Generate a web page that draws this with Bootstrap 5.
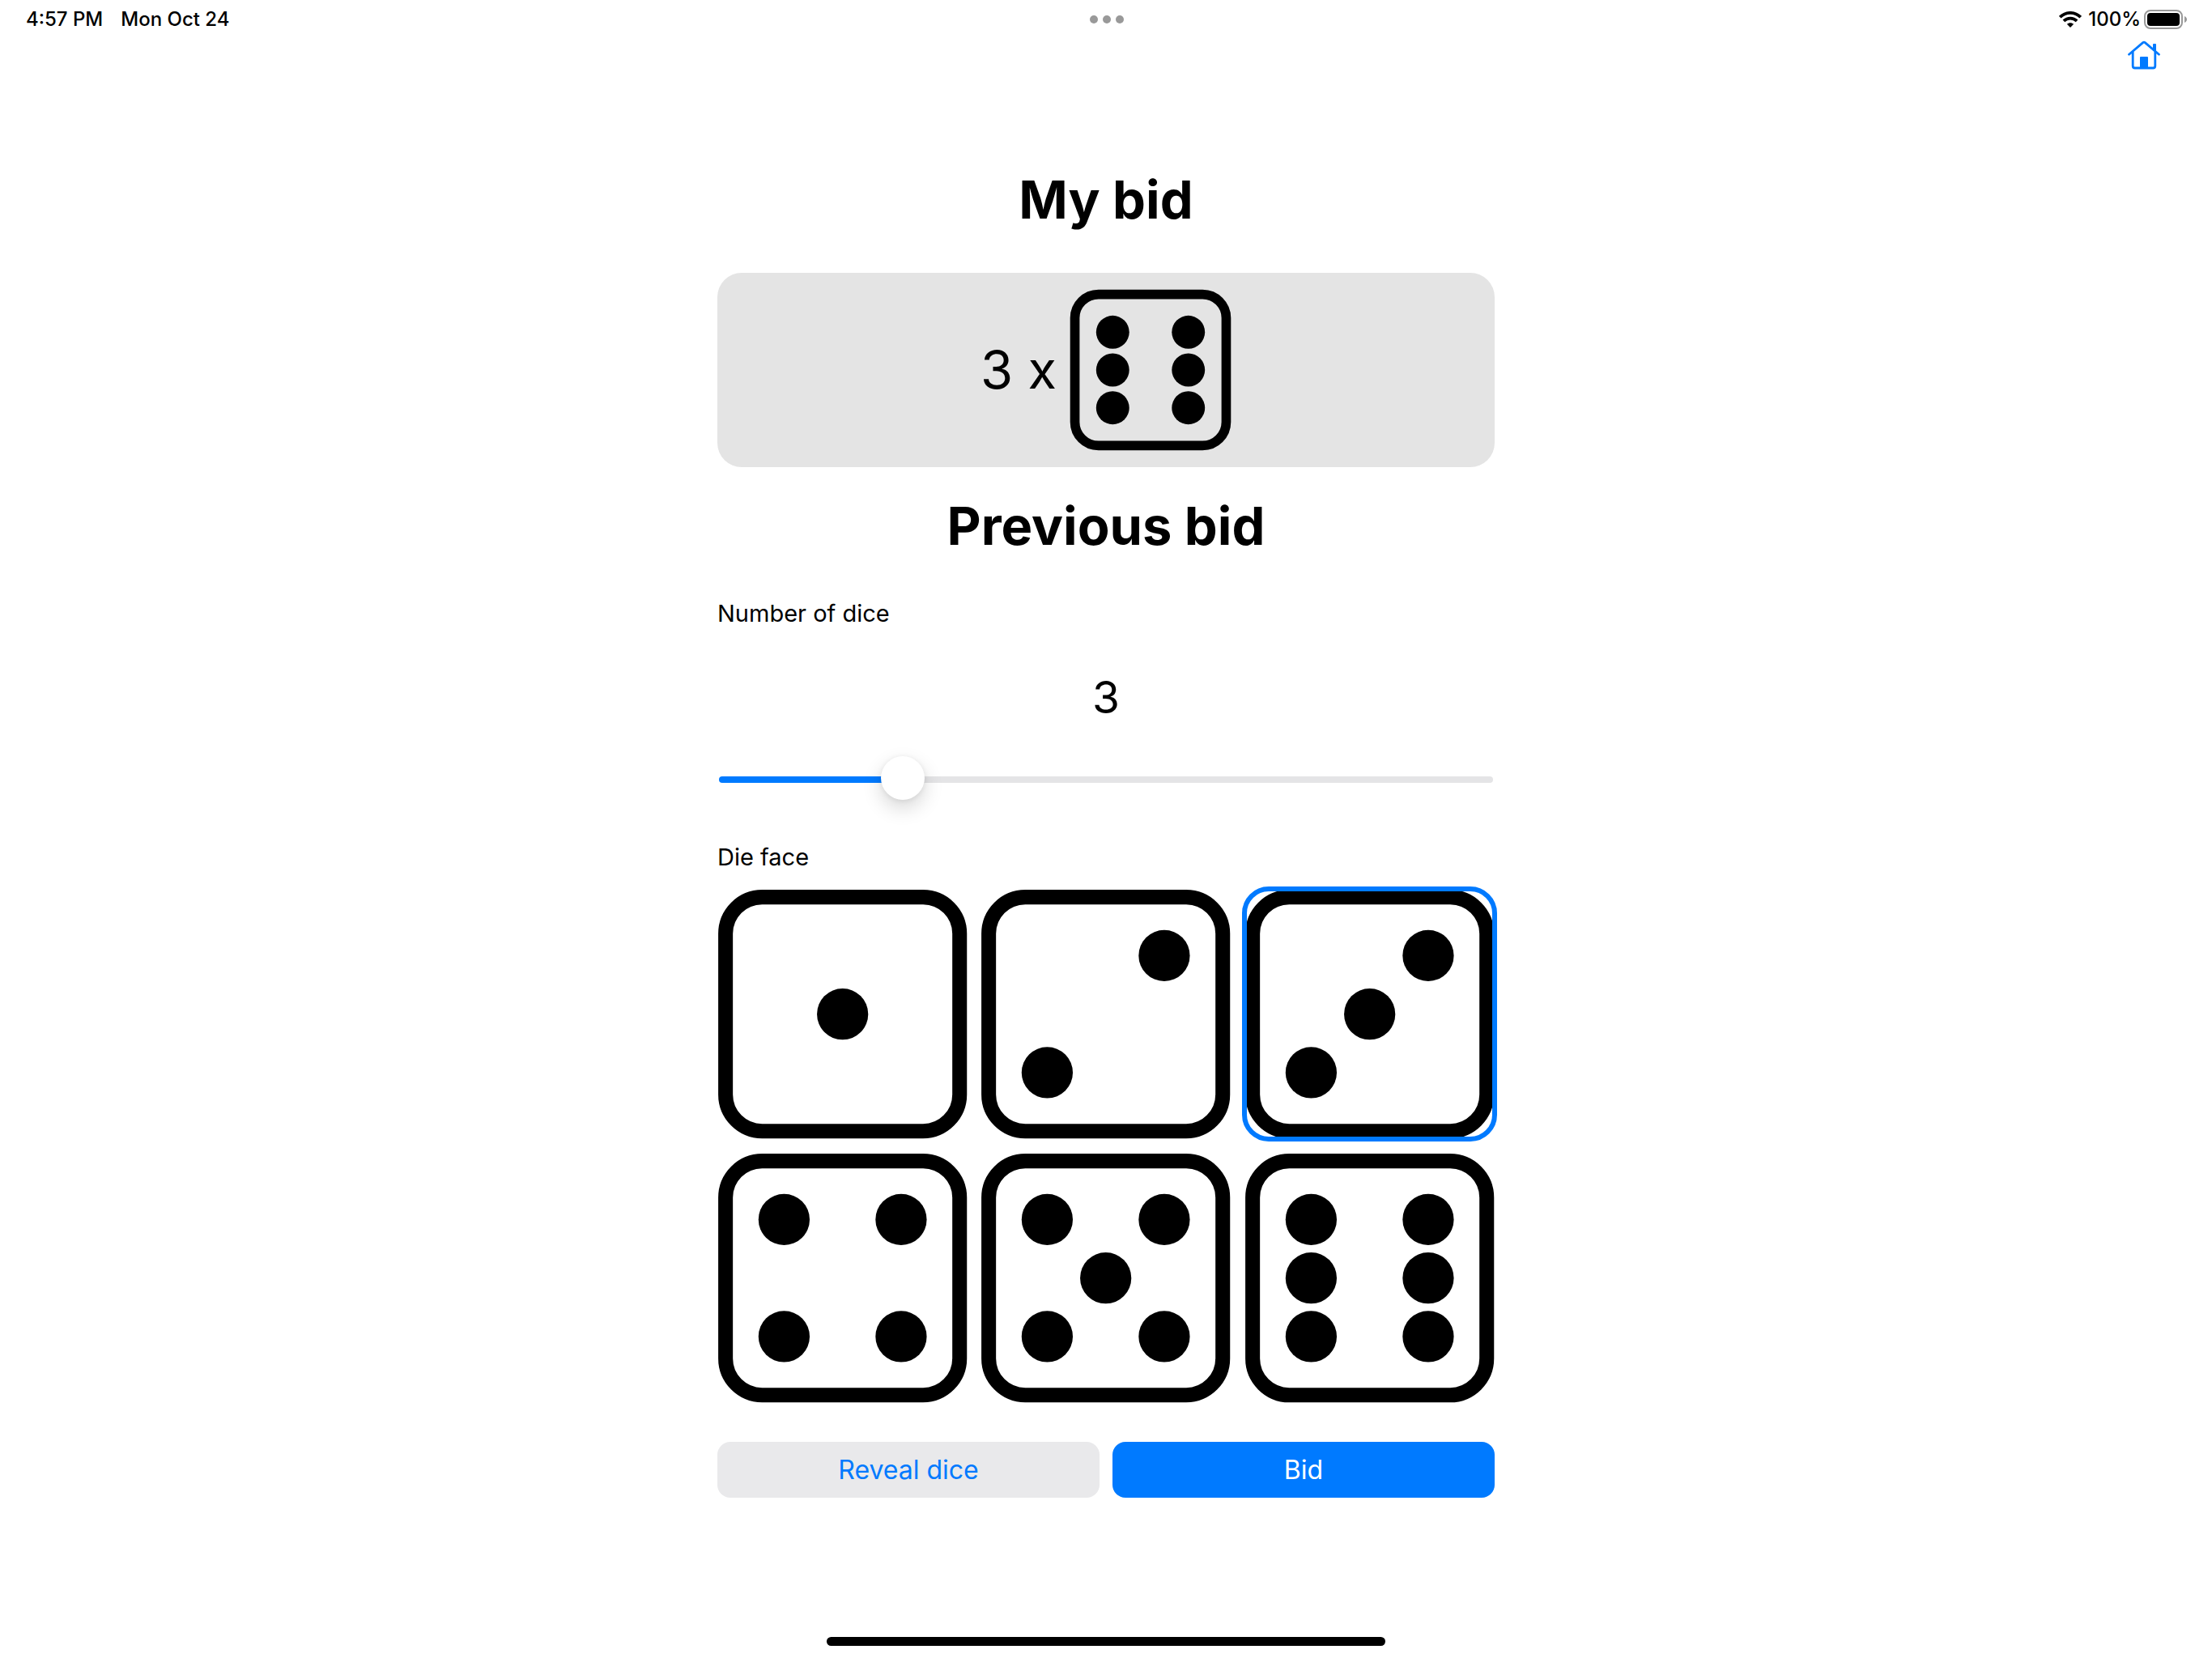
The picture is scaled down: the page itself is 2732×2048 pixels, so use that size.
<!DOCTYPE html>
<html lang="en">
<head>
<meta charset="utf-8">
<meta name="viewport" content="width=device-width, initial-scale=1">
<title>My bid</title>
<link href="https://cdn.jsdelivr.net/npm/bootstrap@5.3.0/dist/css/bootstrap.min.css" rel="stylesheet">
<style>
  :root { --ios-blue: #007aff; }
  body { font-family: Inter, "Liberation Sans", sans-serif; color: #000; background: #fff; }
  .status-bar { height: 48px; padding: 0 30px 0 32px; font-size: 24px; line-height: 48px; font-weight: 500; }
  .status-side { flex: 1 1 0; }
  .status-date { margin-left: 22px; }
  .status-dots { gap: 6px; }
  .status-dot { width: 10px; height: 10px; background: #999; }
  .tool-bar { height: 44px; padding: 2px 64px; }
  .tool-bar a { color: var(--ios-blue); line-height: 0; }
  .bid-panel { max-width: 960px; margin-top: 115px; }
  .bid-title { font-size: 65px; line-height: 80px; font-weight: 700; margin-bottom: 50px; }
  .bid-card { background: #e4e4e4; border-radius: 30px; padding: 20px; margin-bottom: 33px; gap: 16px; }
  .bid-count { font-size: 65px; line-height: 80px; }
  .bid-card svg { width: 200px; height: 200px; }
  .field-label { font-size: 29px; line-height: 36px; }
  .dice-count { font-size: 55px; line-height: 64px; margin: 53px 0 43px; }
  .dice-slider { height: 54px; padding: 0 2px; margin-bottom: 51px; }
  .dice-slider::-webkit-slider-runnable-track { height: 8px; border-radius: 4px; background: linear-gradient(to right, var(--ios-blue) var(--fill), #e4e4e6 var(--fill)); }
  .dice-slider::-webkit-slider-thumb { width: 54px; height: 54px; margin-top: -25px; background: #fff; border: 0; border-radius: 50%; box-shadow: 0 10px 24px rgba(0,0,0,.16), 0 1px 6px rgba(0,0,0,.08); }
  .dice-slider::-webkit-slider-thumb:active { background: #fff; }
  .dice-slider:focus::-webkit-slider-thumb { box-shadow: 0 10px 24px rgba(0,0,0,.16), 0 0 0 3px rgba(0,122,255,.4); }
  .face-grid { display: grid; grid-template-columns: repeat(3, 1fr); gap: 17px 16px; margin: 21px 0 47px; }
  .face-option { cursor: pointer; border-radius: 30px; line-height: 0; }
  .face-option svg { width: 100%; height: auto; }
  .btn-check:checked + .face-option { position: relative; }
  .btn-check:checked + .face-option::after { content: ""; position: absolute; inset: -3px; border: 6px solid var(--ios-blue); border-radius: 33px; }
  .action-row { gap: 16px; }
  .action-btn { flex: 1 1 0; font-size: 32px; line-height: 45px; padding: 12px; border: 0; border-radius: 16px; }
  .btn-reveal, .btn-reveal:hover { background: #e9e9eb; color: var(--ios-blue); }
  .btn-bid, .btn-bid:hover { background: var(--ios-blue); color: #fff; }
  .home-indicator { width: 690px; max-width: 60%; height: 11px; margin-bottom: 15px; }
</style>
</head>
<body>
<svg class="d-none" aria-hidden="true">
  <symbol id="die1" viewBox="-.06 -.06 17.12 17.12"><rect x=".5" y=".5" width="16" height="16" rx="2.5" fill="none" stroke="#000"/><circle cx="8.5" cy="8.5" r="1.75"/></symbol>
  <symbol id="die2" viewBox="-.06 -.06 17.12 17.12"><rect x=".5" y=".5" width="16" height="16" rx="2.5" fill="none" stroke="#000"/><circle cx="12.5" cy="4.5" r="1.75"/><circle cx="4.5" cy="12.5" r="1.75"/></symbol>
  <symbol id="die3" viewBox="-.06 -.06 17.12 17.12"><rect x=".5" y=".5" width="16" height="16" rx="2.5" fill="none" stroke="#000"/><circle cx="12.5" cy="4.5" r="1.75"/><circle cx="8.5" cy="8.5" r="1.75"/><circle cx="4.5" cy="12.5" r="1.75"/></symbol>
  <symbol id="die4" viewBox="-.06 -.06 17.12 17.12"><rect x=".5" y=".5" width="16" height="16" rx="2.5" fill="none" stroke="#000"/><circle cx="4.5" cy="4.5" r="1.75"/><circle cx="12.5" cy="4.5" r="1.75"/><circle cx="4.5" cy="12.5" r="1.75"/><circle cx="12.5" cy="12.5" r="1.75"/></symbol>
  <symbol id="die5" viewBox="-.06 -.06 17.12 17.12"><rect x=".5" y=".5" width="16" height="16" rx="2.5" fill="none" stroke="#000"/><circle cx="4.5" cy="4.5" r="1.75"/><circle cx="12.5" cy="4.5" r="1.75"/><circle cx="8.5" cy="8.5" r="1.75"/><circle cx="4.5" cy="12.5" r="1.75"/><circle cx="12.5" cy="12.5" r="1.75"/></symbol>
  <symbol id="die6" viewBox="-.06 -.06 17.12 17.12"><rect x=".5" y=".5" width="16" height="16" rx="2.5" fill="none" stroke="#000"/><circle cx="4.5" cy="4.5" r="1.75"/><circle cx="12.5" cy="4.5" r="1.75"/><circle cx="4.5" cy="8.5" r="1.75"/><circle cx="12.5" cy="8.5" r="1.75"/><circle cx="4.5" cy="12.5" r="1.75"/><circle cx="12.5" cy="12.5" r="1.75"/></symbol>
</svg>
<div class="d-flex flex-column min-vh-100">
  <header>
    <div class="status-bar d-flex align-items-center">
      <div class="status-side d-flex"><span>4:57 PM</span><span class="status-date">Mon Oct 24</span></div>
      <div class="status-dots d-flex"><i class="status-dot rounded-circle"></i><i class="status-dot rounded-circle"></i><i class="status-dot rounded-circle"></i></div>
      <div class="status-side d-flex justify-content-end align-items-center">
        <svg class="me-2" width="28" height="20" viewBox="0 0 28 20" fill="none" stroke="#000" stroke-width="3.8" role="img" aria-label="Wi-Fi"><path d="M1.300 7.200C8.500 .1 19.500 .1 26.700 7.200M5.900 11.900C10.500 7.500 17.500 7.500 22.100 11.900"/><path d="M14 20l-4.200-4.200c2.400-2.100 6-2.100 8.400 0z" fill="#000" stroke="none"/></svg>
        <span>100%</span>
        <svg class="ms-1" width="54" height="24" viewBox="0 0 54 24" role="img" aria-label="Battery full"><rect x="1" y="1" width="46" height="22" rx="7" fill="none" stroke="#999" stroke-width="2"/><rect x="4" y="4" width="40" height="16" rx="4"/><path d="M50 8c4 1.500 4 6.500 0 8z" fill="#999"/></svg>
      </div>
    </div>
    <nav class="tool-bar d-flex justify-content-end">
      <a href="#" aria-label="Home"><svg width="40" height="36" viewBox="0 0 40 36" fill="none" stroke="currentColor" stroke-width="2.800" stroke-linecap="round" stroke-linejoin="round"><path d="M1.500 17.200L18.700 2.600q1.300-1 2.600 0L38.500 17.200M6.200 14v17.500q0 2.500 2.500 2.500h22.600q2.500 0 2.500-2.500V14"/><path d="M15 34V21q0-1 1-1h8q1 0 1 1v13zM31 5q0-1 1-1h2q1 0 1 1v9l-4-3.300z" fill="currentColor" stroke="none"/></svg></a>
    </nav>
  </header>
  <main class="bid-panel w-100 mx-auto">
    <h1 class="bid-title text-center">My bid</h1>
    <div class="bid-card d-flex justify-content-center align-items-center">
      <span class="bid-count">3 x</span>
      <svg role="img" aria-label="Six"><use href="#die6"/></svg>
    </div>
    <h2 class="bid-title text-center">Previous bid</h2>
    <label class="field-label d-block" for="count">Number of dice</label>
    <output class="dice-count d-block text-center" for="count">3</output>
    <input class="dice-slider form-range d-block" type="range" id="count" min="1" max="10" value="3" style="--fill:23.7%">
    <div class="field-label" id="face-label">Die face</div>
    <div class="face-grid" role="radiogroup" aria-labelledby="face-label">
      <div><input class="btn-check" type="radio" name="face" id="f1"><label class="face-option d-block" for="f1" aria-label="One"><svg viewBox="0 0 17 17"><use href="#die1"/></svg></label></div>
      <div><input class="btn-check" type="radio" name="face" id="f2"><label class="face-option d-block" for="f2" aria-label="Two"><svg viewBox="0 0 17 17"><use href="#die2"/></svg></label></div>
      <div><input class="btn-check" type="radio" name="face" id="f3" checked><label class="face-option d-block" for="f3" aria-label="Three"><svg viewBox="0 0 17 17"><use href="#die3"/></svg></label></div>
      <div><input class="btn-check" type="radio" name="face" id="f4"><label class="face-option d-block" for="f4" aria-label="Four"><svg viewBox="0 0 17 17"><use href="#die4"/></svg></label></div>
      <div><input class="btn-check" type="radio" name="face" id="f5"><label class="face-option d-block" for="f5" aria-label="Five"><svg viewBox="0 0 17 17"><use href="#die5"/></svg></label></div>
      <div><input class="btn-check" type="radio" name="face" id="f6"><label class="face-option d-block" for="f6" aria-label="Six"><svg viewBox="0 0 17 17"><use href="#die6"/></svg></label></div>
    </div>
    <div class="action-row d-flex">
      <button type="button" class="btn action-btn btn-reveal">Reveal dice</button>
      <button type="button" class="btn action-btn btn-bid">Bid</button>
    </div>
  </main>
  <div class="home-indicator bg-black rounded-pill mt-auto mx-auto"></div>
</div>
</body>
</html>
